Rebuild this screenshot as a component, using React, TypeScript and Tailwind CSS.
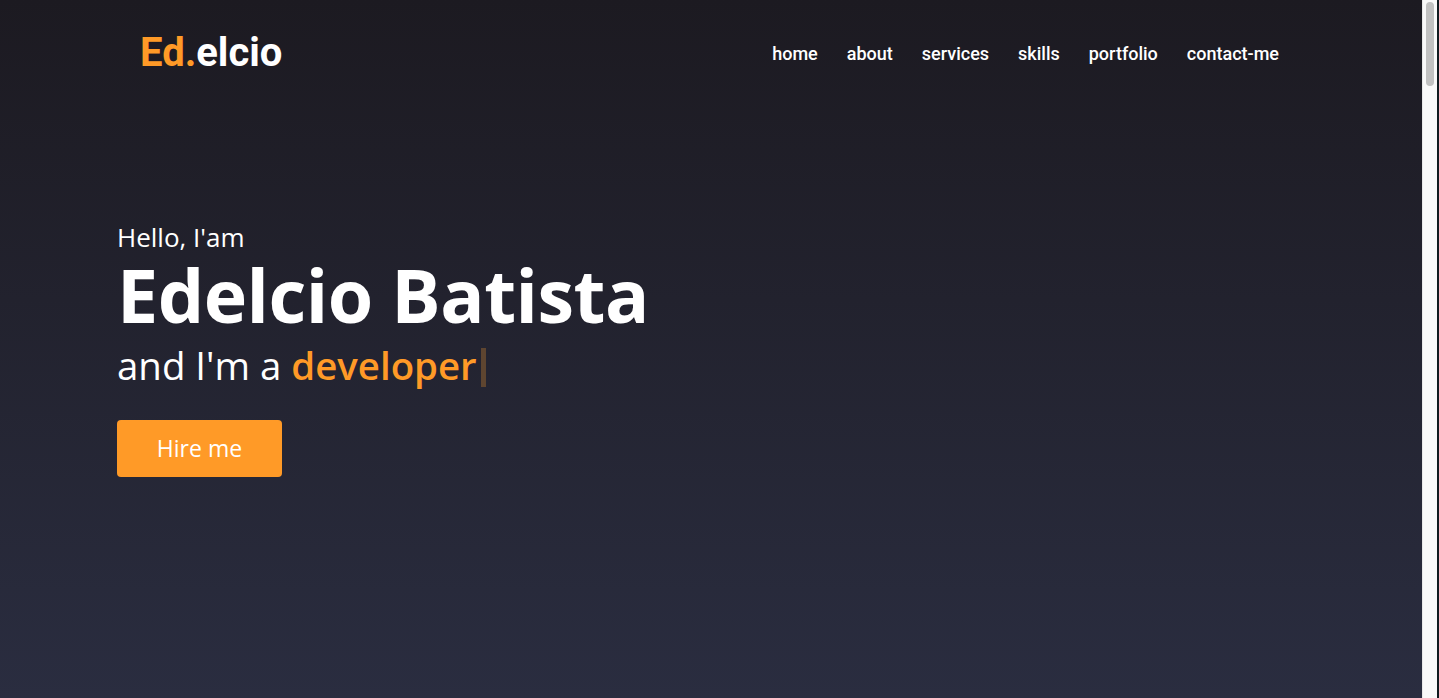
import React from "react";

export default function App() {
  const nav = ["home", "about", "services", "skills", "portfolio", "contact-me"];
  return (
    <div className="flex h-[698px] w-full overflow-hidden bg-[#1c1b22]">
      <div className="flex h-full flex-1 flex-col bg-gradient-to-b from-[#1c1a21] to-[#2a2d40]">
        <header className="flex h-[106px] items-center justify-between pl-[140px] pr-[143px]">
          <div className="font-['Roboto',sans-serif] text-[40px] font-bold leading-none">
            <span className="text-[#ff9a27]">Ed.</span>
            <span className="text-white">elcio</span>
          </div>
          <nav className="flex gap-[29px] font-['Roboto',sans-serif] text-[18px] font-medium text-white">
            {nav.map((n) => (
              <a key={n} className="cursor-pointer">{n}</a>
            ))}
          </nav>
        </header>
        <section className="flex flex-col pl-[117px] pt-[116px] font-['Open_Sans',sans-serif] text-white">
          <div className="text-[26px] leading-[30px]">Hello, I'am</div>
          <div className="mt-[6px] text-[73.5px] font-bold leading-[74px] tracking-[-0.5px]">Edelcio Batista</div>
          <div className="mt-[11px] flex items-center text-[38.4px] leading-[44px]">
            <span>and I'm a&nbsp;</span>
            <span className="font-semibold text-[#ff9a27]">developer</span>
            <span className="ml-[4px] mt-[4px] h-[39px] w-[5px] bg-[#5e4530]" />
          </div>
          <button className="mt-[33px] h-[57px] w-[165px] rounded-[4px] bg-[#ff9a27] text-[23px] text-white">
            Hire me
          </button>
        </section>
      </div>
      <div className="flex h-full w-[15px] flex-col border-l border-[#e8e8e8] bg-[#f9f9f9] px-[3px] pt-[2px]">
        <div className="h-[84px] w-full rounded-full bg-[#c1c1c1]" />
      </div>
      <div className="h-full w-[2px] bg-[#0f1a1f]" />
    </div>
  );
}
